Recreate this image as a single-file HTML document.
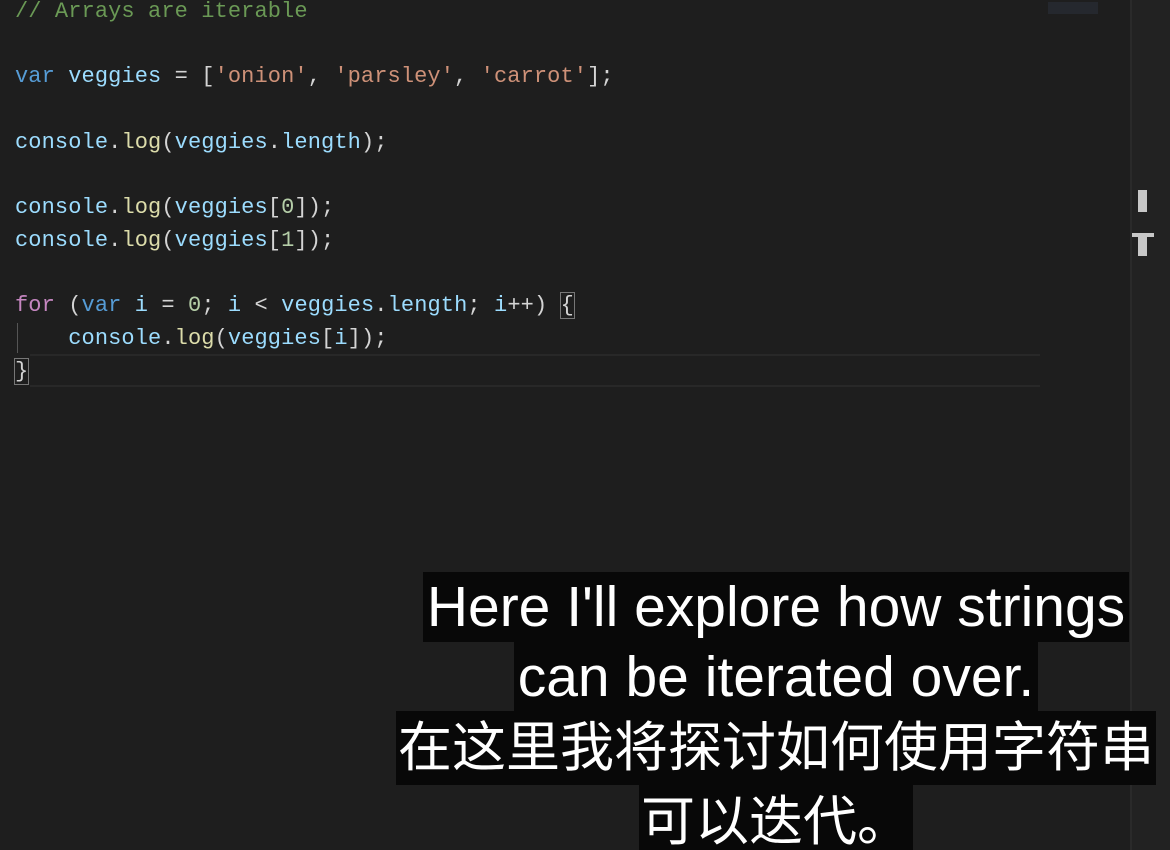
<!DOCTYPE html>
<html style="overflow:hidden;height:850px"><head><meta charset="utf-8"><style>
body{margin:0;width:1170px;height:850px;background:#1e1e1e;overflow:hidden;position:relative}
.code{position:absolute;left:15px;top:-4px;font-family:"Liberation Mono",monospace;font-size:22px;line-height:32.7px;color:#d4d4d4;white-space:pre;letter-spacing:0.1px}
.c{color:#6a9955}.k{color:#569cd6}.v{color:#9cdcfe}.s{color:#ce9178}.f{color:#dcdcaa}.n{color:#b5cea8}.p{color:#c586c0}
.sub{position:absolute;left:382px;width:788px;text-align:center;color:#fff;white-space:nowrap}
.sub span{background:#080808;display:inline-block}
.en span{font-family:"Liberation Sans",sans-serif;font-size:57px;line-height:70px;padding:0 4px}
.zh span{font-family:"Liberation Sans","Noto Sans CJK SC",sans-serif;font-size:54px;line-height:74px;padding:0 2px}
</style></head><body>
<div style="position:absolute;left:1130px;top:0;width:2px;height:850px;background:#2a2a2a"></div>
<div style="position:absolute;left:1132px;top:0;width:38px;height:850px;background:#222"></div>
<div style="position:absolute;left:1048px;top:2px;width:50px;height:12px;background:#2a2e38;opacity:.6"></div>
<div style="position:absolute;left:1138px;top:190px;width:9px;height:22px;background:#c8c8c8"></div>
<div style="position:absolute;left:1132px;top:233px;width:22px;height:4px;background:#c8c8c8"></div>
<div style="position:absolute;left:1138px;top:233px;width:9px;height:23px;background:#c8c8c8"></div>
<div style="position:absolute;left:30px;top:354px;width:1010px;height:2px;background:#282828"></div>
<div style="position:absolute;left:30px;top:385px;width:1010px;height:2px;background:#282828"></div>
<div style="position:absolute;left:17px;top:323px;width:1px;height:30px;background:#555"></div>
<div class="code"><span class="c">// Arrays are iterable</span>

<span class="k">var</span> <span class="v">veggies</span> = [<span class="s">'onion'</span>, <span class="s">'parsley'</span>, <span class="s">'carrot'</span>];

<span class="v">console</span>.<span class="f">log</span>(<span class="v">veggies</span>.<span class="v">length</span>);

<span class="v">console</span>.<span class="f">log</span>(<span class="v">veggies</span>[<span class="n">0</span>]);
<span class="v">console</span>.<span class="f">log</span>(<span class="v">veggies</span>[<span class="n">1</span>]);

<span class="p">for</span> (<span class="k">var</span> <span class="v">i</span> = <span class="n">0</span>; <span class="v">i</span> &lt; <span class="v">veggies</span>.<span class="v">length</span>; <span class="v">i</span>++) <span style="outline:1px solid #777">{</span>
    <span class="v">console</span>.<span class="f">log</span>(<span class="v">veggies</span>[<span class="v">i</span>]);
<span style="outline:1px solid #777">}</span></div>
<div class="sub en" style="top:572px"><span>Here I'll explore how strings</span></div>
<div class="sub en" style="top:642px"><span>can be iterated over.</span></div>
<div class="sub zh" style="top:711px"><span>在这里我将探讨如何使用字符串</span></div>
<div class="sub zh" style="top:785px"><span>可以迭代。</span></div>
</body></html>
